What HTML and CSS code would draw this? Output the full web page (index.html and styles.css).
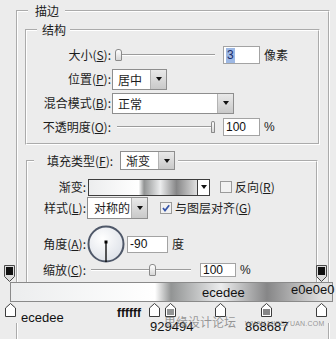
FILE: index.html
```html
<!DOCTYPE html>
<html>
<head>
  <meta charset="utf-8">
  <meta name="viewport" content="width=device-width">
  <title>描边</title>
<link rel="stylesheet" href="styles.css">
</head>
<body>
  <fieldset class="group stroke">
    <legend>描边</legend>

    <fieldset class="group structure">
      <legend>结构</legend>
      <div class="row">
        <label>大小(<u>S</u>):</label>
        <div class="slider size-slider"><span class="thumb"></span></div>
        <span class="num"><span class="selected">3</span></span>
        <span class="unit">像素</span>
      </div>
      <div class="row">
        <label>位置(<u>P</u>):</label>
        <div class="select position-select"><span class="value">居中</span><span class="drop"></span></div>
      </div>
      <div class="row">
        <label>混合模式(<u>B</u>):</label>
        <div class="select blend-select"><span class="value">正常</span><span class="drop"></span></div>
      </div>
      <div class="row">
        <label>不透明度(<u>O</u>):</label>
        <div class="slider opacity-slider"><span class="thumb" style="margin-left: 94px"></span></div>
        <span class="num">100</span>
        <span class="unit latin">%</span>
      </div>
    </fieldset>

    <fieldset class="group fill">
      <legend class="fill-legend">
        <span>填充类型(<u>F</u>):</span>
        <span class="select type-select"><span class="value">渐变</span><span class="drop"></span></span>
      </legend>
      <div class="row gradient-row">
        <label>渐变:</label>
        <div class="swatch"><span class="swatch-bar"></span><span class="swatch-drop"></span></div>
        <svg class="check reverse-check" width="12" height="12" viewBox="0 0 12 12">
          <rect x="0.5" y="0.5" width="11" height="11" fill="#f1f1f1" stroke="#9a9a9a"/>
        </svg>
        <span class="check-label">反向(<u>R</u>)</span>
      </div>
      <div class="row style-row">
        <label>样式(<u>L</u>):</label>
        <div class="select style-select"><span class="value">对称的</span><span class="drop"></span></div>
        <svg class="check align-check" width="12" height="12" viewBox="0 0 12 12">
          <rect x="0.5" y="0.5" width="11" height="11" fill="#f1f1f1" stroke="#9a9a9a"/>
          <path d="M3 6 L5 8.6 L9.2 3.2" fill="none" stroke="#3554a8" stroke-width="1.7"/>
        </svg>
        <span class="check-label">与图层对齐(<u>G</u>)</span>
      </div>
      <div class="row angle-row">
        <label>角度(<u>A</u>):</label>
        <svg class="dial" width="38" height="38" viewBox="0 0 38 38">
          <defs>
            <radialGradient id="dial-fill" cx="40%" cy="35%" r="70%">
              <stop offset="0" stop-color="#ffffff"/>
              <stop offset="1" stop-color="#dde1e8"/>
            </radialGradient>
          </defs>
          <circle cx="19" cy="19" r="17.5" fill="url(#dial-fill)" stroke="#4f5869" stroke-width="2"/>
          <line x1="19" y1="17" x2="19" y2="37" stroke="#000" stroke-width="1.3"/>
          <rect x="17.5" y="15.5" width="3" height="3" fill="#000"/>
        </svg>
        <span class="num angle-num">-90</span>
        <span class="unit">度</span>
      </div>
      <div class="row scale-row">
        <label>缩放(<u>C</u>):</label>
        <div class="slider scale-slider"><span class="thumb" style="margin-left: 58px"></span></div>
        <span class="num scale-num">100</span>
        <span class="unit latin">%</span>
      </div>
    </fieldset>
  </fieldset>

  <!-- gradient editor strip laid over the bottom of the panel -->
  <div class="gradient-editor">
    <div class="stop-row">
      <svg class="opacity-stop" style="left: 4px" width="11" height="17" viewBox="0 0 11 17">
        <path d="M0.5 0.5 H10.5 V11.5 L5.5 16.5 L0.5 11.5 Z" fill="#dcdcdc" stroke="#4a4a4a"/>
        <rect x="2" y="2" width="7" height="8" fill="#111"/>
      </svg>
      <svg class="opacity-stop" style="left: 316px" width="11" height="17" viewBox="0 0 11 17">
        <path d="M0.5 0.5 H10.5 V11.5 L5.5 16.5 L0.5 11.5 Z" fill="#dcdcdc" stroke="#4a4a4a"/>
        <rect x="2" y="2" width="7" height="8" fill="#111"/>
      </svg>
    </div>
    <div class="bar"></div>
    <div class="stop-row color-stops">
      <svg class="color-stop" style="left: 5px" width="11" height="14" viewBox="0 0 11 14">
        <path d="M0.5 5 L5.5 0.5 L10.5 5 V13.5 H0.5 Z" fill="#fff" stroke="#3c3c3c"/>
      </svg>
      <svg class="color-stop" style="left: 149px" width="11" height="14" viewBox="0 0 11 14">
        <path d="M0.5 5 L5.5 0.5 L10.5 5 V13.5 H0.5 Z" fill="#fff" stroke="#3c3c3c"/>
      </svg>
      <svg class="color-stop" style="left: 165px" width="11" height="14" viewBox="0 0 11 14">
        <path d="M0.5 5 L5.5 0.5 L10.5 5 V13.5 H0.5 Z" fill="#fff" stroke="#3c3c3c"/>
        <rect x="2" y="6" width="7" height="6" fill="#929494"/>
      </svg>
      <svg class="color-stop" style="left: 215px" width="11" height="14" viewBox="0 0 11 14">
        <path d="M0.5 5 L5.5 0.5 L10.5 5 V13.5 H0.5 Z" fill="#fff" stroke="#3c3c3c"/>
      </svg>
      <svg class="color-stop" style="left: 261px" width="11" height="14" viewBox="0 0 11 14">
        <path d="M0.5 5 L5.5 0.5 L10.5 5 V13.5 H0.5 Z" fill="#fff" stroke="#3c3c3c"/>
        <rect x="2" y="6" width="7" height="6" fill="#868687"/>
      </svg>
      <svg class="color-stop" style="left: 316px" width="11" height="14" viewBox="0 0 11 14">
        <path d="M0.5 5 L5.5 0.5 L10.5 5 V13.5 H0.5 Z" fill="#fff" stroke="#3c3c3c"/>
      </svg>
    </div>

    <span class="tag" style="left: 202px; top: 23px">ecedee</span>
    <span class="tag" style="left: 291px; top: 20px">e0e0e0</span>
    <span class="tag" style="left: 21px; top: 48px">ecedee</span>
    <span class="tag tag-bold" style="left: 117px; top: 44px">ffffff</span>
    <span class="tag" style="left: 150px; top: 57px">929494</span>
    <span class="tag" style="left: 245px; top: 57px">868687</span>
    <span class="watermark" style="left: 164px; top: 53px">思缘设计论坛</span>
    <span class="watermark site" style="left: 245px; top: 57px">WWW.MISSYUAN.COM</span>
  </div>
</body>
</html>
```

FILE: styles.css
```css
* {
  box-sizing: border-box;
}

body {
  margin: 0;
  width: 336px;
  height: 339px;
  overflow: hidden;
  position: relative;
  background: #ececec;
  font-family: "Noto Sans CJK SC", "Liberation Sans", sans-serif;
  font-size: 12px;
  line-height: 14px;
  color: #1c1c1c;
}

u {
  text-underline-offset: 1px;
}

.latin,
.num,
.tag {
  font-family: "Liberation Sans", Arial, sans-serif;
}

/* etched group boxes */
.group {
  margin: 0;
  min-width: 0;
  border: 2px groove #ffffff;
}

.group > legend {
  line-height: 14px;
}

.stroke {
  margin: 4px 0 0 16px;
  width: 314px;
  height: 335px;
  padding: 5px 8px 0 7px;
  border-bottom: none;
}

.stroke > legend {
  margin-left: 3px;
  padding: 0 6px 0 7px;
}

.structure {
  padding: 7px 0 5px 0;
}

.structure > legend {
  margin-left: 10px;
  padding: 0 4px 0 5px;
}

.fill {
  margin: 6px 2px 0 1px;
  padding: 8px 0 16px 0;
}

.fill-legend {
  display: flex;
  align-items: center;
  margin-left: 6px;
  padding: 0 3px 0 13px;
}

.fill-legend .select {
  margin-left: 7px;
}

/* rows */
.row {
  display: flex;
  align-items: center;
  height: 22px;
  white-space: nowrap;
}

.structure .row + .row {
  margin-top: 2px;
}

.structure label {
  width: 84px;
  margin-right: 1px;
  text-align: right;
}

.fill label {
  width: 58px;
  margin-right: 2px;
  text-align: right;
}

.gradient-row {
  height: 18px;
}

.style-row {
  margin-top: 1px;
}

.angle-row {
  height: 38px;
  margin-top: 6px;
}

.scale-row {
  height: 14px;
}

/* sliders */
.slider {
  display: flex;
  align-items: center;
  height: 14px;
  background: linear-gradient(to bottom,
    transparent 6px, #9c9c9c 6px, #9c9c9c 7px,
    #ffffff 7px, #ffffff 8px, transparent 8px);
}

.thumb {
  width: 7px;
  height: 12px;
  border: 1px solid #8a8a8a;
  border-radius: 3px 3px 1px 1px;
  background: linear-gradient(#ffffff, #d6d6d6);
}

.size-slider {
  width: 100px;
  margin-left: 3px;
}

.opacity-slider {
  width: 98px;
  margin-left: 5px;
}

.scale-slider {
  width: 100px;
  margin-left: 3px;
}

/* number fields */
.num {
  display: flex;
  align-items: center;
  width: 37px;
  height: 18px;
  margin-left: 8px;
  padding-left: 2px;
  border: 1px solid #a3a3a3;
  background: #ffffff;
  color: #111;
}

.selected {
  padding: 0 1px;
  background: #9db8e4;
  color: #1b2d6b;
  line-height: 15px;
}

.angle-num {
  width: 41px;
  height: 17px;
  margin-left: 2px;
}

.scale-num {
  width: 36px;
  height: 14px;
  margin-left: 9px;
}

.unit {
  margin-left: 4px;
}

/* drop-down fields */
.select {
  display: flex;
  height: 21px;
  border: 1px solid #8e8e8e;
  background: #ffffff;
}

.select .value {
  flex: 1;
  padding-left: 5px;
  line-height: 19px;
}

.select .drop {
  display: flex;
  align-items: center;
  justify-content: center;
  width: 16px;
  border-left: 1px solid #b3b3b3;
  background: linear-gradient(#e9e9e9, #c9c9c9);
}

.select .drop::after {
  content: "";
  border-left: 3.5px solid transparent;
  border-right: 3.5px solid transparent;
  border-top: 4px solid #111;
}

.position-select {
  width: 55px;
}

.blend-select {
  width: 122px;
}

.type-select {
  width: 55px;
  height: 19px;
}

.type-select .value {
  line-height: 17px;
}

.style-select {
  width: 61px;
  height: 22px;
  margin-left: -1px;
}

.style-select .value {
  padding-left: 6px;
}

/* gradient swatch */
.swatch {
  display: flex;
  width: 122px;
  height: 17px;
  border: 1px solid #3d3d3d;
  background: #ffffff;
}

.swatch-bar {
  flex: 1;
  background: linear-gradient(to right,
    #ecedee 0%, #ffffff 46%, #929494 51%,
    #ecedee 66%, #868687 81%, #e0e0e0 100%);
}

.swatch-drop {
  display: flex;
  align-items: center;
  justify-content: center;
  width: 12px;
  border-left: 1px solid #3d3d3d;
}

.swatch-drop::after {
  content: "";
  border-left: 3px solid transparent;
  border-right: 3px solid transparent;
  border-top: 4px solid #111;
}

.check {
  flex: none;
}

.reverse-check {
  margin-left: 10px;
}

.align-check {
  margin-left: 12px;
}

.check-label {
  margin-left: 3px;
}

.dial {
  margin-left: -1px;
}

/* gradient editor */
.gradient-editor {
  position: absolute;
  left: 0;
  top: 262px;
  width: 336px;
  height: 77px;
}

.stop-row {
  position: relative;
  height: 20px;
}

.opacity-stop {
  position: absolute;
  top: 3px;
}

.bar {
  width: 323px;
  height: 20px;
  margin-left: 10px;
  border: 1px solid #8a8a8a;
  background: linear-gradient(to right,
    #ecedee 0px, #ffffff 144px, #929494 160px,
    #ecedee 210px, #868687 256px, #e0e0e0 311px);
}

.color-stops {
  height: 21px;
  background: #ececec;
}

.color-stop {
  position: absolute;
  top: 1px;
}

.tag {
  position: absolute;
  font-size: 13px;
  line-height: 15px;
  color: #111;
}

.tag-bold {
  font-size: 12px;
  font-weight: bold;
}

.watermark {
  position: absolute;
  font-size: 12px;
  line-height: 14px;
  color: rgba(120, 120, 120, 0.75);
}

.watermark.site {
  font-family: "Liberation Sans", Arial, sans-serif;
  font-size: 7px;
  line-height: 9px;
  letter-spacing: 0.2px;
}
```
